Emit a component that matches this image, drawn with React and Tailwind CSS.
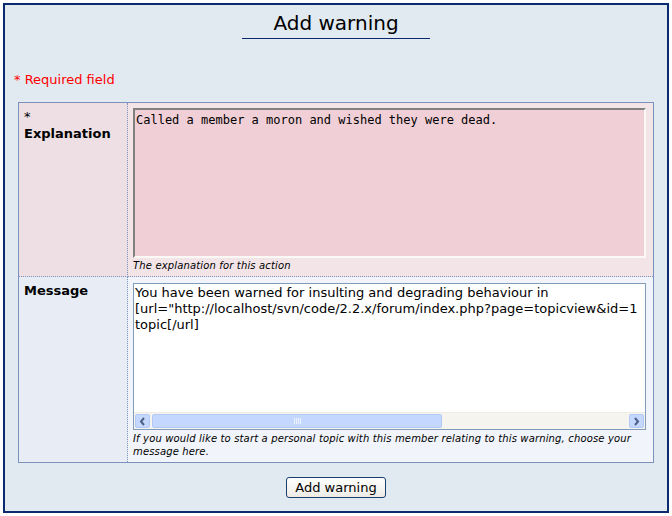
// Formulario "Add warning" — recreación estática

const fuente = { fontFamily: '"DejaVu Sans", Verdana, sans-serif' };

function BarraScroll() {
    return (
        <div className="flex h-[17px] items-stretch bg-[#f5f4ee] border-t border-[#eeede5]">
            <div className="m-[1px] w-[15px] rounded-[2px] border border-[#b4c8f6] bg-[#c4d7fe] flex items-center justify-center">
                <svg width="7" height="9" viewBox="0 0 7 9">
                    <path d="M5 1 L2 4.5 L5 8" stroke="#4d6185" strokeWidth="2" fill="none" />
                </svg>
            </div>
            <div className="my-[1px] ml-[1px] w-[290px] rounded-[2px] border border-[#b4c8f6] bg-[#c4d7fe] flex items-center justify-center">
                <div className="flex gap-[1px]">
                    <div className="w-[1px] h-[6px] bg-[#eef4fe]" />
                    <div className="w-[1px] h-[6px] bg-[#eef4fe]" />
                    <div className="w-[1px] h-[6px] bg-[#eef4fe]" />
                    <div className="w-[1px] h-[6px] bg-[#eef4fe]" />
                </div>
            </div>
            <div className="flex-1" />
            <div className="m-[1px] w-[15px] rounded-[2px] border border-[#b4c8f6] bg-[#c4d7fe] flex items-center justify-center">
                <svg width="7" height="9" viewBox="0 0 7 9">
                    <path d="M2 1 L5 4.5 L2 8" stroke="#4d6185" strokeWidth="2" fill="none" />
                </svg>
            </div>
        </div>
    );
}

export default function App() {
    return (
        <div className="w-[672px] h-[516px] p-[3px] bg-white" style={fuente}>
            <div className="h-full border-2 border-[#0c2a6e] bg-[#e1e9f1] flex flex-col">
                {/* ---------- TÍTULO ---------- */}
                <div className="flex justify-center pt-[6px]">
                    <h1 className="w-[188px] text-center text-[20px] leading-[25px] text-black border-b border-[#0c2a6e] pb-[2px]">
                        Add warning
                    </h1>
                </div>

                <p className="mt-[33px] ml-[9px] text-[13px] leading-[16px] text-[#ff0000]">* Required field</p>

                {/* ---------- TABLA ---------- */}
                <div className="mx-[13px] mt-[14px] border border-[#7b93bc] grid grid-cols-[109px_1fr]">
                    <div className="bg-[#eddfe4] border-r border-dotted border-[#7b93bc] border-b px-[5px] pt-[5px] text-[13px] leading-[17px] text-black">
                        <div>*</div>
                        <div className="font-bold">Explanation</div>
                    </div>
                    <div className="bg-[#f2e4e7] border-b border-dotted border-[#7b93bc] pl-[5px] pr-[7px] pt-[5px] pb-[4px]">
                        <div
                            className="h-[150px] bg-[#f0cfd6] border-2 border-t-[#808080] border-l-[#808080] border-b-[#fbf9f6] border-r-[#fbf9f6] px-[1px] pt-[2px] text-[12px] leading-[16px] text-black"
                            style={{ fontFamily: '"DejaVu Sans Mono", monospace' }}
                        >
                            Called a member a moron and wished they were dead.
                        </div>
                        <p className="mt-[1px] text-[10px] leading-[13px] italic tracking-[0.15px] text-black">
                            The explanation for this action
                        </p>
                    </div>

                    <div className="bg-[#e8edf5] border-r border-dotted border-[#7b93bc] px-[5px] pt-[5px] text-[13px] leading-[17px] font-bold text-black">
                        Message
                    </div>
                    <div className="bg-[#f1f4fa] pl-[5px] pr-[7px] pt-[6px] pb-[4px]">
                        <div className="h-[147px] bg-white border border-[#7f9db9] flex flex-col">
                            <div className="flex-1 overflow-hidden whitespace-pre px-[1px] pt-[1px] text-[13px] leading-[16px] text-black">
                                {'You have been warned for insulting and degrading behaviour in\n[url="http://localhost/svn/code/2.2.x/forum/index.php?page=topicview&id=1\ntopic[/url]'}
                            </div>
                            <BarraScroll />
                        </div>
                        <p className="mt-[2px] text-[10px] leading-[13px] italic tracking-[0.15px] text-black">
                            If you would like to start a personal topic with this member relating to this warning, choose your message here.
                        </p>
                    </div>
                </div>

                {/* ---------- BOTÓN ---------- */}
                <div className="flex justify-center mt-[14px]">
                    <button className="w-[100px] h-[21px] rounded-[3px] border border-[#1c3f6e] bg-gradient-to-b from-white to-[#ecebe6] text-[13px] leading-[17px] text-black">
                        Add warning
                    </button>
                </div>
            </div>
        </div>
    );
}
